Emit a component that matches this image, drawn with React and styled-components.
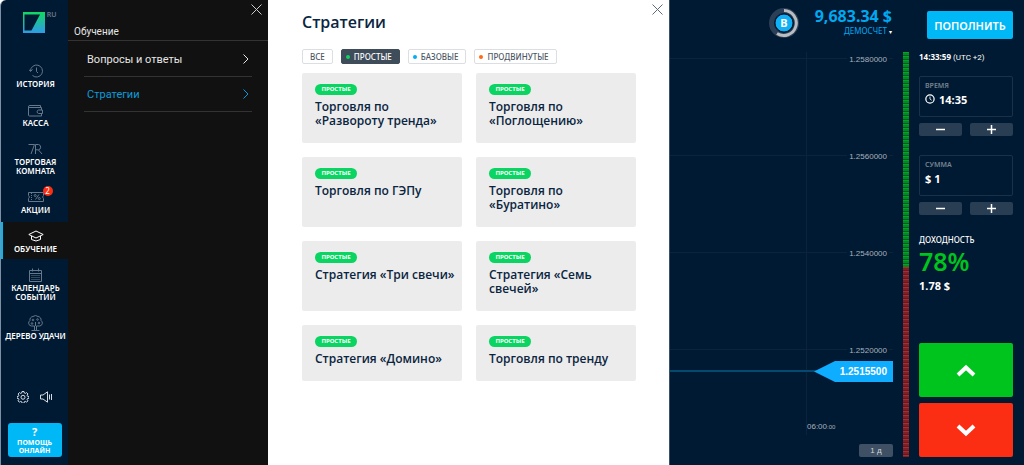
import React from 'react';
import styled, { createGlobalStyle } from 'styled-components';

const GlobalStyle = createGlobalStyle`
  * {
    box-sizing: border-box;
  }
  body {
    margin: 0;
    background: #fff;
    font-family: 'Noto Sans', sans-serif;
  }
  button,
  input {
    margin: 0;
    padding: 0;
    border: 0;
    background: none;
    font-family: inherit;
    color: inherit;
  }
  button {
    cursor: pointer;
  }
  a {
    color: inherit;
    text-decoration: none;
  }
  h1,
  h2,
  p {
    margin: 0;
  }
  svg {
    display: block;
  }
`;

const Page = styled.div`
  display: flex;
  min-height: 100vh;
  border-left: 1px solid #7c8fa3;
  border-top-left-radius: 6px;
  overflow: hidden;
  background: #001a33;
`;

/* sidebar */

const Sidebar = styled.nav`
  display: flex;
  flex-direction: column;
  align-items: center;
  flex: none;
  width: 67px;
  padding: 12px 0 8px;
  color: #fff;
`;

const Brand = styled.div`
  display: flex;
  align-items: flex-start;
  gap: 2px;
  height: 45px;
  padding-left: 10px;
`;

const Language = styled.button`
  font-size: 7px;
  font-weight: 600;
  line-height: 6px;
  color: #6a7a8b;
`;

const Menu = styled.div`
  display: flex;
  flex-direction: column;
  gap: 2px;
  width: 100%;
`;

const MenuItem = styled.a`
  display: flex;
  flex-direction: column;
  align-items: center;
  padding: 6px 0;
  border-left: 2px solid ${props => (props.$active ? '#00b8f5' : 'transparent')};
  background: ${props => (props.$active ? '#111' : 'transparent')};
  color: ${props => (props.$active ? '#fff' : '#66788b')};
`;

const MenuIcon = styled.span`
  position: relative;
  display: flex;
  align-items: center;
  height: 16px;
`;

const MenuLabel = styled.span`
  font-size: 8px;
  font-weight: 600;
  line-height: 9px;
  text-align: center;
  text-transform: uppercase;
  white-space: pre;
  color: #fff;
`;

const Badge = styled.span`
  position: absolute;
  top: -3px;
  right: -9px;
  width: 10px;
  border-radius: 5px;
  background: #fb2e14;
  color: #fff;
  font-size: 8px;
  line-height: 10px;
  text-align: center;
`;

const Tools = styled.div`
  display: flex;
  gap: 11px;
  margin-top: auto;
  margin-bottom: 20px;
  color: #d5dbe1;
`;

const HelpButton = styled.button`
  width: 54px;
  height: 34px;
  border-radius: 3px;
  background: #00b8f5;
  color: #fff;
  font-size: 7px;
  font-weight: 700;
  line-height: 8px;
  text-transform: uppercase;
`;

const HelpMark = styled.span`
  display: block;
  font-size: 11px;
  line-height: 14px;
`;

/* submenu */

const Submenu = styled.aside`
  flex: none;
  width: 200px;
  background: #111;
  color: #e6e6e6;
  font-family: Roboto, sans-serif;
`;

const SubmenuHead = styled.header`
  display: grid;
  grid-template-columns: 1fr auto;
  height: 41px;
  padding: 4px 6px 2px;
  border-bottom: 1px solid #333;
`;

const SubmenuTitle = styled.h2`
  align-self: end;
  font-size: 10px;
  font-weight: 400;
  line-height: 12px;
`;

const CloseButton = styled.button`
  width: 11px;
  height: 11px;
  color: ${props => props.color};
`;

const SubmenuLink = styled.a`
  display: flex;
  align-items: center;
  justify-content: space-between;
  height: 35px;
  margin: 0 16px;
  padding: 0 3px;
  border-bottom: 1px solid #333;
  font-size: 11px;
  color: ${props => (props.$active ? '#0d9bd8' : '#e6e6e6')};
`;

const SubmenuList = styled.div`
  padding-top: 1px;
`;

/* strategies */

const Strategies = styled.main`
  display: flex;
  flex-direction: column;
  flex: 0 0 401px;
  padding: 4px 6px 0 34px;
  background: #fff;
  color: #0a2540;
`;

const StrategiesHead = styled.header`
  display: flex;
  justify-content: space-between;
  padding-bottom: 17px;
`;

const Title = styled.h1`
  padding-top: 8px;
  font-family: 'Open Sans', sans-serif;
  font-size: 16px;
  font-weight: 600;
  line-height: 20px;
`;

const Filters = styled.div`
  display: flex;
  gap: 8px;
`;

const Filter = styled.button`
  display: flex;
  align-items: center;
  gap: 4px;
  height: 15px;
  padding: 0 ${props => (props.$dot ? '7px 0 4px' : '7px')};
  border: 1px solid ${props => (props.$active ? '#3f4c5a' : '#dcdfe2')};
  border-radius: 2px;
  background: ${props => (props.$active ? '#3f4c5a' : '#fff')};
  color: ${props => (props.$active ? '#fff' : '#4d5966')};
  font-size: 8px;
  font-weight: 500;
  line-height: 12px;
  text-transform: uppercase;
`;

const Dot = styled.span`
  width: 4px;
  height: 4px;
  border-radius: 50%;
  background: ${props => props.color};
`;

const Cards = styled.div`
  display: grid;
  grid-template-columns: 1fr 1fr;
  gap: 14px;
  padding: 9px 27px 14px 0;
`;

const Card = styled.a`
  padding: 11px 6px 15px 13px;
  border-radius: 2px;
  background: #ececec;
`;

const Tag = styled.span`
  display: block;
  width: 42px;
  margin-bottom: 5px;
  border-radius: 6px;
  background: #0bd562;
  color: #fff;
  font-size: 6px;
  font-weight: 700;
  line-height: 11px;
  text-align: center;
  text-transform: uppercase;
`;

const CardTitle = styled.h2`
  font-family: 'Open Sans', sans-serif;
  font-size: 12px;
  font-weight: 600;
  line-height: 14px;
`;

/* trading */

const Trading = styled.section`
  display: flex;
  flex-direction: column;
  flex: 1;
  min-width: 0;
  border-left: 1px solid #3c5066;
  color: #fff;
`;

const TopBar = styled.header`
  display: flex;
  align-items: flex-start;
  justify-content: flex-end;
  height: 45px;
  padding: 8px 11px 0 0;
`;

const Account = styled.div`
  display: flex;
  flex-direction: column;
  align-items: flex-end;
  margin: 0 35px 0 16px;
  color: #00a8f0;
`;

const Balance = styled.strong`
  font-size: 16px;
  font-weight: 700;
  line-height: 17px;
`;

const AccountType = styled.button`
  font-size: 8px;
  line-height: 12px;
  text-transform: uppercase;

  span {
    color: #fff;
    font-size: 6px;
  }
`;

const DepositButton = styled.button`
  width: 86px;
  height: 28px;
  margin-top: 3px;
  border-radius: 2px;
  background: #00b8f5;
  color: #fff;
  font-size: 11px;
  font-weight: 600;
  text-transform: uppercase;
`;

const Workspace = styled.div`
  display: flex;
  flex: 1;
  gap: 10px;
  padding: 0 11px 8px 0;
`;

const ChartColumn = styled.div`
  display: flex;
  flex-direction: column;
  flex: 1;
  justify-content: space-between;
  align-items: flex-end;
  min-width: 0;
  font-family: 'Liberation Sans', sans-serif;
`;

const Chart = styled.svg`
  width: 100%;
  height: 390px;
  font-size: 8px;
  fill: #a8b1bb;
`;

const Timeframe = styled.button`
  width: 34px;
  height: 13px;
  border-radius: 2px;
  background: #3f5064;
  color: #d0d6dc;
  font-size: 8px;
  line-height: 13px;
`;

const Mood = styled.div`
  display: flex;
  flex-direction: column;
  width: 6px;
  padding-top: 7px;
`;

const MoodPart = styled.div`
  background: repeating-linear-gradient(
    ${props => props.$bright} 0 1px,
    ${props => props.$base} 1px 3px,
    ${props => props.$dark} 3px 4px
  );
`;

const Deal = styled.form`
  display: flex;
  flex-direction: column;
  width: 94px;
  padding-top: 5px;
`;

const Clock = styled.p`
  margin-bottom: 12px;
  font-size: 8px;
  line-height: 13px;
  white-space: nowrap;

  span {
    font-family: Roboto, sans-serif;
  }
`;

const Field = styled.label`
  display: block;
  height: 41px;
  padding: 4px 5px;
  border: 1px solid #1b3148;
  border-radius: 2px;
`;

const FieldName = styled.span`
  display: block;
  color: #75838f;
  font-size: 7px;
  font-weight: 600;
  line-height: 9px;
  text-transform: uppercase;
`;

const FieldValue = styled.span`
  display: flex;
  align-items: center;
  gap: 4px;
  height: 18px;

  input {
    width: 100%;
    min-width: 0;
    font-size: 11px;
    font-weight: 700;
    outline: none;
  }
`;

const Stepper = styled.div`
  display: flex;
  gap: 8px;
  margin: 6px 0 19px;
`;

const StepButton = styled.button`
  display: flex;
  flex: 1;
  align-items: center;
  justify-content: center;
  height: 13px;
  border-radius: 2px;
  background: #293d53;
`;

const ProfitLabel = styled.p`
  font-size: 8px;
  font-weight: 500;
  line-height: 12px;
  text-transform: uppercase;
`;

const ProfitRate = styled.p`
  color: #00c41e;
  font-size: 25px;
  font-weight: 600;
  line-height: 30px;
`;

const ProfitSum = styled.p`
  padding-top: 2px;
  font-size: 11px;
  font-weight: 700;
  line-height: 16px;
`;

const DealButtons = styled.div`
  display: flex;
  flex-direction: column;
  gap: 6px;
  margin-top: auto;
`;

const DealButton = styled.button`
  display: flex;
  align-items: center;
  justify-content: center;
  height: 54px;
  border-radius: 2px;
  background: ${props => props.color};
`;

const Line = ({ width, height, box, children, stroke = 1 }) => (
  <svg
    width={width}
    height={height}
    viewBox={box || `0 0 ${width} ${height}`}
    fill="none"
    stroke="currentColor"
    strokeWidth={stroke}
    aria-hidden="true"
  >
    {children}
  </svg>
);

const Logo = () => (
  <svg width="22" height="21" viewBox="0 0 22 21" aria-hidden="true">
    <defs>
      <linearGradient id="logo" x1="0" y1="0" x2="0" y2="1">
        <stop offset="0" stopColor="#12d860" />
        <stop offset="1" stopColor="#2f9be8" />
      </linearGradient>
    </defs>
    <path fill="url(#logo)" d="M0 0H22V21H0Z" />
    <path fill="#001a33" d="M1.5 2.5H17L8.5 18.5H1.5Z" />
  </svg>
);

const Cross = () => (
  <Line width={11} height={11}>
    <path d="M0.5 0.5L10.5 10.5M10.5 0.5L0.5 10.5" />
  </Line>
);

const icons = {
  history: (
    <Line width={14} height={14}>
      <path d="M1.5 7A6 6 0 1 1 3.5 11.5M0 5.5L1.5 7.5L3.5 5.5M7.5 3.5V7.5L9 9" />
    </Line>
  ),
  wallet: (
    <Line width={15} height={13}>
      <path d="M12.5 3.5V1.5H2Q0.5 1.5 0.5 2.5T2 3.5H13.5V6M0.5 2.5V11Q0.5 12 1.5 12H13.5V9.5M14.5 6H10.5A1.8 1.8 0 0 0 10.5 9.5H14.5Z" />
    </Line>
  ),
  room: (
    <Line width={15} height={12}>
      <path d="M0.5 1.5H6.5L3 11M7.5 11V1.5H10.5A2.7 2.7 0 0 1 10.5 6.8H7.5M10.5 7L14 11" />
    </Line>
  ),
  ticket: (
    <Line width={16} height={12}>
      <path d="M0.5 1.5H15.5V4.5L14.5 6L15.5 7.5V10.5H0.5V7.5L1.5 6L0.5 4.5ZM7.5 8.5L11 3.5" />
      <path d="M3.5 2V10" strokeDasharray="1 1" />
      <circle cx="7.2" cy="4.5" r="1" />
      <circle cx="11.3" cy="7.5" r="1" />
    </Line>
  ),
  cap: (
    <Line width={16} height={12}>
      <path d="M0.8 4.5L8 1L15.2 4.5L8 8ZM3.5 6V9.5Q8 12.5 12.5 9.5V6" />
    </Line>
  ),
  calendar: (
    <Line width={13} height={14}>
      <path d="M0.5 2.5H12.5V13.5H0.5ZM0.5 5.5H12.5M3.5 0.5V3.5M9.5 0.5V3.5" />
      <path d="M2.5 7.5H11M2.5 9.5H11M2.5 11.5H11" strokeDasharray="1 1" />
    </Line>
  ),
  tree: (
    <Line width={15} height={16}>
      <path d="M6.5 15V11H3.5A3 3 0 0 1 2 5.5A3.3 3.3 0 0 1 5 1.5Q7.5 -0.5 10 1.5A3.3 3.3 0 0 1 13 5.5A3 3 0 0 1 11.5 11H8.5V15M3.5 15.5H11.5M7.5 11V7" />
      <circle cx="5" cy="5" r="0.8" />
      <circle cx="9.5" cy="4.5" r="0.8" />
      <circle cx="11" cy="8" r="0.8" />
      <circle cx="4" cy="8.5" r="0.8" />
    </Line>
  ),
};

const menu = [
  { icon: 'history', label: 'История' },
  { icon: 'wallet', label: 'Касса' },
  { icon: 'room', label: 'Торговая\nкомната' },
  { icon: 'ticket', label: 'Акции', badge: 2 },
  { icon: 'cap', label: 'Обучение', active: true },
  { icon: 'calendar', label: 'Календарь\nсобытий' },
  { icon: 'tree', label: 'Дерево удачи' },
];

const submenu = [
  { label: 'Вопросы и ответы' },
  { label: 'Стратегии', active: true },
];

const filters = [
  { label: 'Все' },
  { label: 'Простые', color: '#0bd562', active: true },
  { label: 'Базовые', color: '#00b0f5' },
  { label: 'Продвинутые', color: '#ff6a13' },
];

const strategies = [
  'Торговля по «Развороту тренда»',
  'Торговля по «Поглощению»',
  'Торговля по ГЭПу',
  'Торговля по «Буратино»',
  'Стратегия «Три свечи»',
  'Стратегия «Семь свечей»',
  'Стратегия «Домино»',
  'Торговля по тренду',
];

const ticks = [
  { y: 13, price: '1.2580000' },
  { y: 110, price: '1.2560000' },
  { y: 207, price: '1.2540000' },
  { y: 304, price: '1.2520000' },
];

const buyers = 53;

const Steps = ({ name }) => (
  <Stepper>
    <StepButton type="button" aria-label={`${name}: меньше`}>
      <Line width={9} height={9} stroke={1.5}>
        <path d="M0 4.5H9" />
      </Line>
    </StepButton>
    <StepButton type="button" aria-label={`${name}: больше`}>
      <Line width={9} height={9} stroke={1.5}>
        <path d="M0 4.5H9M4.5 0V9" />
      </Line>
    </StepButton>
  </Stepper>
);

const PriceChart = () => (
  <Chart>
    {ticks.map(tick => (
      <line
        key={tick.price}
        x2="100%"
        y1={tick.y + 0.5}
        y2={tick.y + 0.5}
        stroke="#0b243c"
      />
    ))}
    <svg x="100%" overflow="visible">
      <path d="M-86.5 7V390" stroke="#0b243c" />
      {ticks.map(tick => (
        <g key={tick.price}>
          <path d={`M-46 ${tick.y}H-4`} stroke="#001a33" strokeWidth="5" />
          <text x="-6" y={tick.y + 4} textAnchor="end">
            {tick.price}
          </text>
        </g>
      ))}
      <path d="M-600 326H-76" stroke="#044a70" strokeWidth="2" />
      <path d="M-79 326.5L-58 316H0V337H-58Z" fill="#0fadff" />
      <text x="-6" y="330" textAnchor="end" fontSize="10" fontWeight="700" fill="#fff">
        1.2515500
      </text>
      <text x="-86" y="384">
        06:00<tspan fontSize="6">:00</tspan>
      </text>
    </svg>
  </Chart>
);

const Level = () => (
  <svg width="30" height="30" viewBox="0 0 30 30" aria-hidden="true">
    <circle cx="15" cy="15" r="12.5" fill="none" stroke="#2b3f56" strokeWidth="5" />
    <path d="M15 2.5A12.5 12.5 0 1 1 8 25.5" fill="none" stroke="#b9bdc2" strokeWidth="3" />
    <circle cx="15" cy="15" r="9" fill="#0fb0f5" stroke="#001a33" />
    <text
      x="15"
      y="19"
      textAnchor="middle"
      fontSize="11"
      fontWeight="700"
      fill="#fff"
    >
      B
    </text>
  </svg>
);

const App = () => (
  <React.Fragment>
    <GlobalStyle />
    <Page>
      <Sidebar>
        <Brand>
          <Logo />
          <Language>RU</Language>
        </Brand>
        <Menu>
          {menu.map(item => (
            <MenuItem key={item.icon} href="#" $active={item.active}>
              <MenuIcon>
                {icons[item.icon]}
                {item.badge && <Badge>{item.badge}</Badge>}
              </MenuIcon>
              <MenuLabel>{item.label}</MenuLabel>
            </MenuItem>
          ))}
        </Menu>
        <Tools>
          <button aria-label="Настройки">
            <Line width={12} height={12} box="0 0 24 24" stroke={2}>
              <path d="M10 1h4l.6 3 2 .9 2.6-1.7 2.7 2.7-1.7 2.6.8 2 3 .5v3.5l-3 .6-.8 2 1.7 2.6-2.7 2.7-2.6-1.7-2 .8-.6 3h-4l-.6-3-2-.8-2.6 1.7-2.7-2.7 1.7-2.6-.8-2-3-.6V11l3-.5.8-2-1.7-2.6 2.7-2.7 2.6 1.7 2-.9z" />
              <circle cx="12" cy="12.5" r="4" />
            </Line>
          </button>
          <button aria-label="Звук">
            <Line width={13} height={12}>
              <path d="M0.5 4H3L7.5 0.8V11.2L3 8H0.5ZM9.5 3.5V8.5M11.5 3V9" />
            </Line>
          </button>
        </Tools>
        <HelpButton>
          <HelpMark>?</HelpMark>
          Помощь онлайн
        </HelpButton>
      </Sidebar>

      <Submenu>
        <SubmenuHead>
          <SubmenuTitle>Обучение</SubmenuTitle>
          <CloseButton color="#ccc" aria-label="Закрыть меню">
            <Cross />
          </CloseButton>
        </SubmenuHead>
        <SubmenuList>
          {submenu.map(item => (
            <SubmenuLink key={item.label} href="#" $active={item.active}>
              {item.label}
              <Line width={6} height={10}>
                <path d="M0.5 0.5L5 5L0.5 9.5" />
              </Line>
            </SubmenuLink>
          ))}
        </SubmenuList>
      </Submenu>

      <Strategies>
        <StrategiesHead>
          <Title>Стратегии</Title>
          <CloseButton color="#5a6b7c" aria-label="Закрыть стратегии">
            <Cross />
          </CloseButton>
        </StrategiesHead>
        <Filters>
          {filters.map(item => (
            <Filter key={item.label} $active={item.active} $dot={item.color}>
              {item.color && <Dot color={item.color} />}
              {item.label}
            </Filter>
          ))}
        </Filters>
        <Cards>
          {strategies.map(name => (
            <Card key={name} href="#">
              <Tag>Простые</Tag>
              <CardTitle>{name}</CardTitle>
            </Card>
          ))}
        </Cards>
      </Strategies>

      <Trading>
        <TopBar>
          <Level />
          <Account>
            <Balance>9,683.34 $</Balance>
            <AccountType>
              Демосчет <span>▾</span>
            </AccountType>
          </Account>
          <DepositButton>Пополнить</DepositButton>
        </TopBar>
        <Workspace>
          <ChartColumn>
            <PriceChart />
            <Timeframe>1 д</Timeframe>
          </ChartColumn>
          <Mood>
            <MoodPart
              $bright="#00a81f"
              $base="#06871f"
              $dark="#045a28"
              style={{ flexGrow: buyers }}
            />
            <MoodPart
              $bright="#b52a24"
              $base="#7e2028"
              $dark="#5a1c2c"
              style={{ flexGrow: 100 - buyers }}
            />
          </Mood>
          <Deal>
            <Clock>
              <b>14:33:59</b> <span>(UTC +2)</span>
            </Clock>
            <Field>
              <FieldName>Время</FieldName>
              <FieldValue>
                <Line width={12} height={12}>
                  <circle cx="6" cy="6" r="5" strokeWidth="1.5" />
                  <path d="M6 3V6L8 7.5" />
                </Line>
                <input type="text" defaultValue="14:35" />
              </FieldValue>
            </Field>
            <Steps name="Время" />
            <Field>
              <FieldName>Сумма</FieldName>
              <FieldValue>
                <input type="text" defaultValue="$ 1" />
              </FieldValue>
            </Field>
            <Steps name="Сумма" />
            <ProfitLabel>Доходность</ProfitLabel>
            <ProfitRate>78%</ProfitRate>
            <ProfitSum>1.78 $</ProfitSum>
            <DealButtons>
              <DealButton type="button" color="#00c41e" aria-label="Вверх">
                <Line width={20} height={13} stroke={4}>
                  <path d="M2 11L10 3.5L18 11" />
                </Line>
              </DealButton>
              <DealButton type="button" color="#fb2e14" aria-label="Вниз">
                <Line width={20} height={13} stroke={4}>
                  <path d="M2 2L10 9.5L18 2" />
                </Line>
              </DealButton>
            </DealButtons>
          </Deal>
        </Workspace>
      </Trading>
    </Page>
  </React.Fragment>
);

export default App;
